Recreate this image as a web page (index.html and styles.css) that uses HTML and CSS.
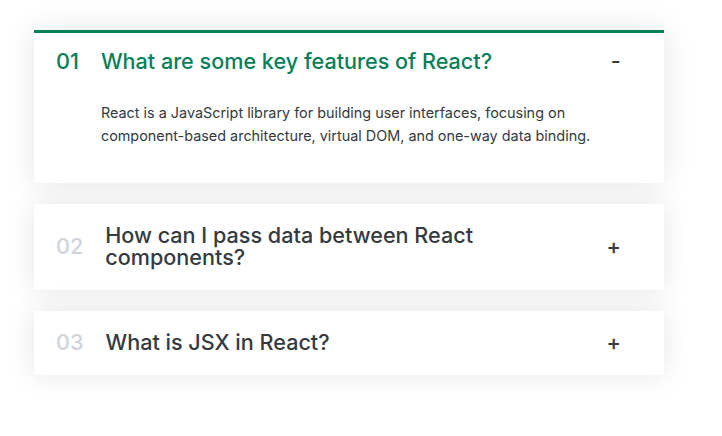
FILE: index.html
```
<!DOCTYPE html>
<html lang="en">
<head>
<meta charset="utf-8">
<title>Accordion</title>
<link rel="stylesheet" href="styles.css">
</head>
<body>
<div class="accordion">
  <div class="item open">
    <p class="number">01</p>
    <p class="title">What are some key features of React?</p>
    <p class="icon">-</p>
    <div class="content-box">React is a JavaScript library for building user interfaces, focusing on component-based architecture, virtual DOM, and one-way data binding.</div>
  </div>
  <div class="item">
    <p class="number">02</p>
    <p class="title">How can I pass data between React components?</p>
    <p class="icon">+</p>
  </div>
  <div class="item">
    <p class="number">03</p>
    <p class="title">What is JSX in React?</p>
    <p class="icon">+</p>
  </div>
</div>
</body>
</html>
```
FILE: styles.css
```
* { box-sizing: border-box; }
html, body { margin: 0; padding: 0; background: #fff; }
body {
  font-family: Inter, "Noto Sans", sans-serif;
  color: #343a40;
  min-height: 100vh;
  padding: 30px 0 60px 34px;
}
.accordion {
  width: 630px;
  display: flex;
  flex-direction: column;
  gap: 21.6px;
}
.item {
  box-shadow: 0 0 28.8px rgba(0, 0, 0, 0.1);
  background: #fff;
  padding: 18px 43.2px 18px 22px;
  border-top: 3px solid #fff;
  border-bottom: 3px solid #fff;
  display: grid;
  grid-template-columns: auto 1fr auto;
  column-gap: 22px;
  row-gap: 28.8px;
  align-items: center;
}
.item p { margin: 0; }
.number, .title, .icon {
  font-size: 21.6px;
  font-weight: 500;
  line-height: 1;
}
.number { color: #ced4da; }
.open { border-top-color: #087f5b; }
.open .number, .open .title { color: #087f5b; }
.content-box {
  grid-column: 2 / -1;
  padding-bottom: 14.4px;
  font-size: 14.4px;
  line-height: 1.6;
}
```
